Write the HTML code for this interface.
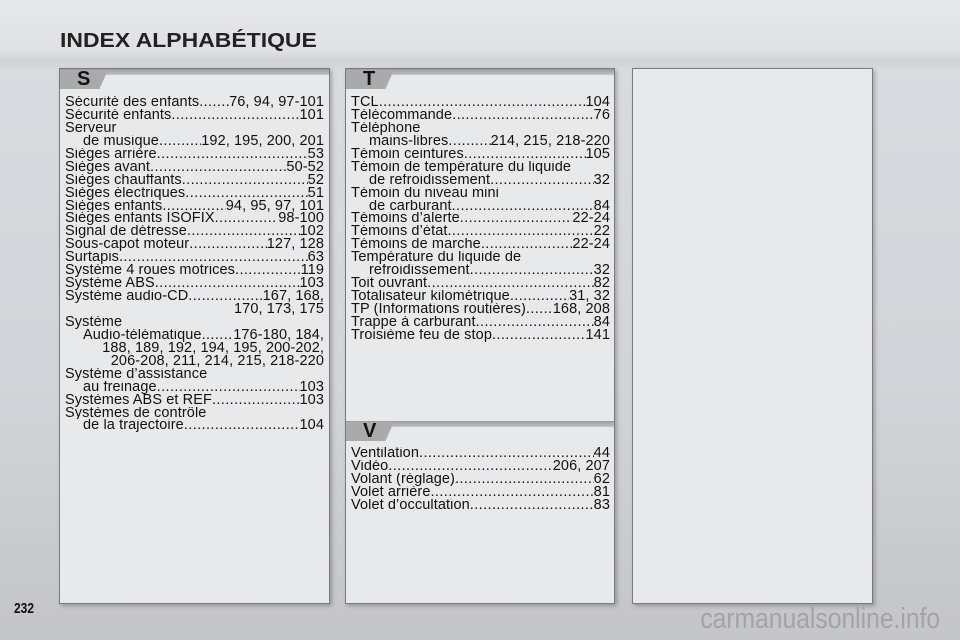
<!DOCTYPE html>
<html><head><meta charset="utf-8"><style>
*{margin:0;padding:0;box-sizing:border-box}
body{width:960px;height:640px;overflow:hidden;position:relative;font-family:"Liberation Sans",sans-serif;color:#111;
background:linear-gradient(180deg,#e6e8ec 0%,#dfe1e5 8%,#cfd1d5 9.5%,#d9dbe0 11%,#d2d4d9 60%,#c4c5c8 100%)}
.title{position:absolute;left:60px;top:29px;font-size:20.5px;font-weight:bold;color:#222;transform:scaleX(1.12);transform-origin:left}
.panel{position:absolute;background:#e8e9eb;border:1.5px solid #7a7b7e;box-shadow:2px 2px 4px rgba(0,0,0,.25)}
.tab{position:absolute;left:0;height:19px;width:48px;background:#a9aaac;clip-path:polygon(0 0,100% 0,82% 100%,0 100%)}
.bar{position:absolute;left:0;right:0;height:6px;background:linear-gradient(#9a9b9d,#c4c5c7)}
.let{position:absolute;font-size:20px;font-weight:bold;color:#111}
.list{position:absolute;font-size:14.5px;line-height:12.93px;letter-spacing:0.1px}
.r{display:flex;white-space:nowrap;overflow:hidden}
.r .d{flex:1;overflow:hidden;min-width:0;letter-spacing:0.4px}
.r .d::before{content:"................................................................................................................................"}
.i{padding-left:18px}
.rt{text-align:right}
.num{position:absolute;left:14px;top:600px;font-size:15px;font-weight:bold;color:#111;transform:scaleX(.8);transform-origin:left}
.wm{position:absolute;right:20px;top:603px;font-size:29px;color:#a3a4a6;transform:scaleX(.85);transform-origin:right}
</style></head><body>
<div class="title">INDEX ALPHABÉTIQUE</div>

<div class="panel" style="left:59px;top:68px;width:271px;height:536px">
<div class="bar" style="top:0"></div>
<div class="tab" style="top:1px"></div>
<div class="let" style="left:17px;top:-1px">S</div>
<div class="list" style="left:5px;top:27px;width:259px">
<div class="r"><span>Sécurité des enfants</span><span class="d"></span><span>76, 94, 97-101</span></div>
<div class="r"><span>Sécurité enfants</span><span class="d"></span><span>101</span></div>
<div class="r"><span>Serveur</span></div>
<div class="r i"><span>de musique</span><span class="d"></span><span>192, 195, 200, 201</span></div>
<div class="r"><span>Sièges arrière</span><span class="d"></span><span>53</span></div>
<div class="r"><span>Sièges avant</span><span class="d"></span><span>50-52</span></div>
<div class="r"><span>Sièges chauffants</span><span class="d"></span><span>52</span></div>
<div class="r"><span>Sièges électriques</span><span class="d"></span><span>51</span></div>
<div class="r"><span>Sièges enfants</span><span class="d"></span><span>94, 95, 97, 101</span></div>
<div class="r"><span>Sièges enfants ISOFIX</span><span class="d"></span><span>98-100</span></div>
<div class="r"><span>Signal de détresse</span><span class="d"></span><span>102</span></div>
<div class="r"><span>Sous-capot moteur</span><span class="d"></span><span>127, 128</span></div>
<div class="r"><span>Surtapis</span><span class="d"></span><span>63</span></div>
<div class="r"><span>Système 4 roues motrices</span><span class="d"></span><span>119</span></div>
<div class="r"><span>Système ABS</span><span class="d"></span><span>103</span></div>
<div class="r"><span>Système audio-CD</span><span class="d"></span><span>167, 168,</span></div>
<div class="rt">170, 173, 175</div>
<div class="r"><span>Système</span></div>
<div class="r i"><span>Audio-télématique</span><span class="d"></span><span>176-180, 184,</span></div>
<div class="rt">188, 189, 192, 194, 195, 200-202,</div>
<div class="rt">206-208, 211, 214, 215, 218-220</div>
<div class="r"><span>Système d’assistance</span></div>
<div class="r i"><span>au freinage</span><span class="d"></span><span>103</span></div>
<div class="r"><span>Systèmes ABS et REF</span><span class="d"></span><span>103</span></div>
<div class="r"><span>Systèmes de contrôle</span></div>
<div class="r i"><span>de la trajectoire</span><span class="d"></span><span>104</span></div>
</div></div>

<div class="panel" style="left:345px;top:68px;width:270px;height:536px">
<div class="bar" style="top:0"></div>
<div class="tab" style="top:1px"></div>
<div class="let" style="left:17px;top:-1px">T</div>
<div class="list" style="left:5px;top:27px;width:259px">
<div class="r"><span>TCL</span><span class="d"></span><span>104</span></div>
<div class="r"><span>Télécommande</span><span class="d"></span><span>76</span></div>
<div class="r"><span>Téléphone</span></div>
<div class="r i"><span>mains-libres</span><span class="d"></span><span>214, 215, 218-220</span></div>
<div class="r"><span>Témoin ceintures</span><span class="d"></span><span>105</span></div>
<div class="r"><span>Témoin de température du liquide</span></div>
<div class="r i"><span>de refroidissement</span><span class="d"></span><span>32</span></div>
<div class="r"><span>Témoin du niveau mini</span></div>
<div class="r i"><span>de carburant</span><span class="d"></span><span>84</span></div>
<div class="r"><span>Témoins d’alerte</span><span class="d"></span><span>22-24</span></div>
<div class="r"><span>Témoins d’état</span><span class="d"></span><span>22</span></div>
<div class="r"><span>Témoins de marche</span><span class="d"></span><span>22-24</span></div>
<div class="r"><span>Température du liquide de</span></div>
<div class="r i"><span>refroidissement</span><span class="d"></span><span>32</span></div>
<div class="r"><span>Toit ouvrant</span><span class="d"></span><span>82</span></div>
<div class="r"><span>Totalisateur kilométrique</span><span class="d"></span><span>31, 32</span></div>
<div class="r"><span>TP (Informations routières)</span><span class="d"></span><span>168, 208</span></div>
<div class="r"><span>Trappe à carburant</span><span class="d"></span><span>84</span></div>
<div class="r"><span>Troisième feu de stop</span><span class="d"></span><span>141</span></div>
</div>
<div class="bar" style="top:352px"></div>
<div class="tab" style="top:353px"></div>
<div class="let" style="left:17px;top:351px">V</div>
<div class="list" style="left:5px;top:378px;width:259px">
<div class="r"><span>Ventilation</span><span class="d"></span><span>44</span></div>
<div class="r"><span>Vidéo</span><span class="d"></span><span>206, 207</span></div>
<div class="r"><span>Volant (réglage)</span><span class="d"></span><span>62</span></div>
<div class="r"><span>Volet arrière</span><span class="d"></span><span>81</span></div>
<div class="r"><span>Volet d’occultation</span><span class="d"></span><span>83</span></div>
</div></div>

<div class="panel" style="left:632px;top:68px;width:241px;height:536px"></div>

<div class="num">232</div>
<div class="wm">carmanualsonline.info</div>
</body></html>
